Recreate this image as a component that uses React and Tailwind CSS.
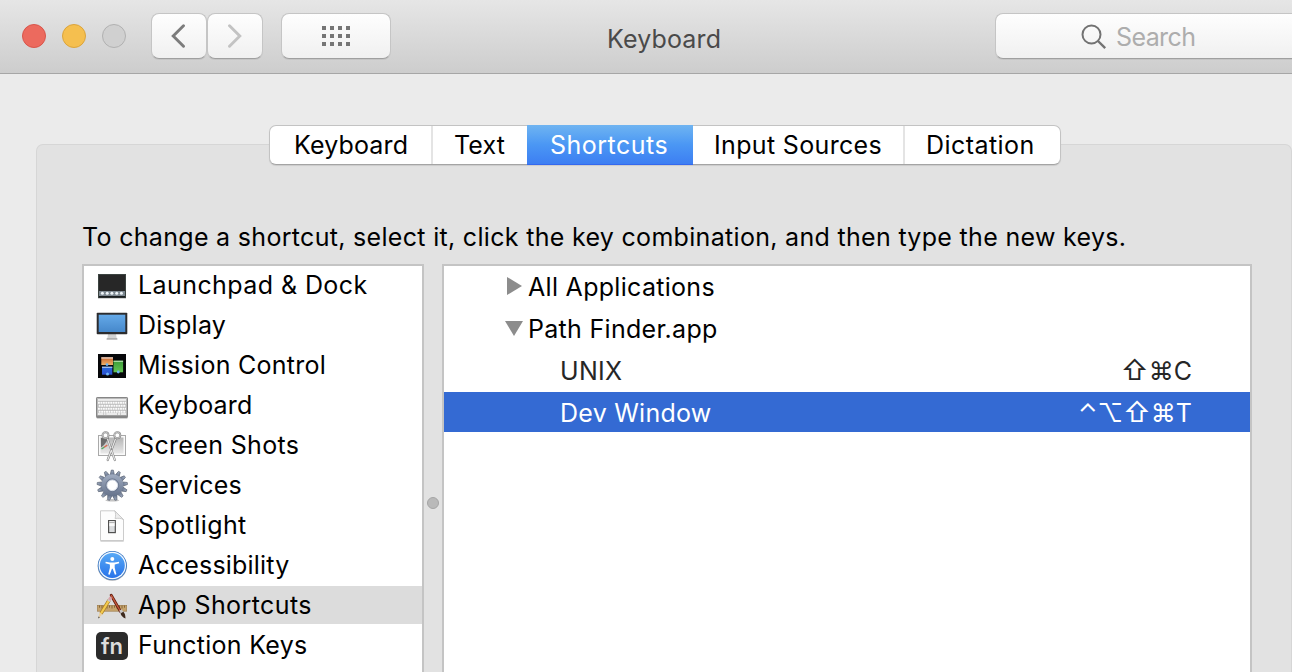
const ICONS = {
  launchpad: (
    <>
      <rect x="2" y="4.5" width="28" height="24.5" fill="#d4d4d4" />
      <rect x="2" y="4" width="28" height="24" fill="#3b4340" />
      <rect x="3" y="5" width="26" height="16" fill="#272727" />
      <rect x="3" y="21" width="26" height="5" fill="#7d8890" />
      <rect x="3" y="26" width="26" height="1.500" fill="#1b1e20" />
      {[5.5, 10.3, 15, 19.8, 24.5].map((x) => (
        <circle key={x} cx={x + 0.9} cy="23.300" r="1.500" fill="#eef4f8" />
      ))}
    </>
  ),
  display: (
    <>
      <path d="M12 24h8l.7 4.500H11.300z" fill="#d3d3d3" />
      <rect x="10.500" y="28" width="11" height="1.800" rx=".9" fill="#b0b0b0" />
      <rect x=".7" y="2.700" width="30.600" height="21.600" rx=".8" fill="#2c2c2e" />
      <rect x="2.700" y="4.700" width="26.600" height="17.300" fill="url(#screen)" />
    </>
  ),
  mission: (
    <>
      <rect x="2" y="4" width="28" height="24" fill="#060709" />
      <rect x="5.300" y="7.300" width="11.700" height="7.700" fill="url(#orange)" />
      <rect x="5.300" y="7.300" width="11.700" height="1.300" fill="#e8d9cf" />
      <rect x="6" y="16.700" width="10.300" height="8" fill="url(#blue)" />
      <rect x="6" y="16.700" width="10.300" height="1.200" fill="#a8c3ee" />
      <rect x="17.500" y="10.700" width="9.600" height="11.600" fill="url(#green)" />
      <rect x="17.500" y="10.700" width="9.600" height="1.200" fill="#b4e0ad" />
      <circle cx="11" cy="14.600" r="1.400" fill="#6bb5f5" />
      <circle cx="11.500" cy="24" r="1.500" fill="#6bb5f5" />
      <circle cx="22.300" cy="22" r="1.400" fill="#6bb5f5" />
    </>
  ),
  keyboard: (
    <>
      <rect x=".6" y="26.500" width="31" height="2.500" rx="1" fill="#d5d5d5" />
      <rect x=".5" y="7.500" width="31" height="20" rx=".6" fill="#b9b9b9" stroke="#868686" />
      <rect x="1" y="25.500" width="30" height="1.800" fill="#858585" />
      <rect x="2" y="9.200" width="28" height="1.500" fill="#fafafa" />
      {[12, 15, 18, 21].map((y, i) => (
        <path
          key={y}
          d={`M${2 + (i % 2) * 0.7} ${y + 0.8}H30`}
          stroke="#fbfbfb"
          strokeWidth="1.900"
          strokeDasharray="1.900 .55"
        />
      ))}
      <path d="M2 24h5M7.600 24h2M10.200 24h11M22 24h2M24.700 24H30" stroke="#fbfbfb" strokeWidth="1.500" />
    </>
  ),
  screenshots: (
    <>
      <rect x="2.500" y="5.500" width="27" height="20" fill="#fafafa" stroke="#a9a9a9" />
      <rect x="4.500" y="7.500" width="23" height="16" fill="url(#photo)" />
      <path d="M5 8h8l-5 7-3 2.500z" fill="#555" opacity=".8" />
      <path d="M5.500 19l3-2" stroke="#55a864" strokeWidth="1.500" />
      <path d="M8.300 17.200l3-2" stroke="#d96f55" strokeWidth="1.500" />
      <path d="M11 7.500L18.800 30M20 7.500L11.700 30" stroke="#7b7b7b" strokeWidth="2.200" strokeLinecap="round" />
      <path d="M11 7.500L18.800 30M20 7.500L11.700 30" stroke="#e6e6e6" strokeWidth="1.200" strokeLinecap="round" />
      <circle cx="9.500" cy="5.200" r="3" fill="#fff" stroke="#8c8c8c" strokeWidth="1.900" />
      <circle cx="21.300" cy="5.200" r="3" fill="#fff" stroke="#8c8c8c" strokeWidth="1.900" />
      <circle cx="9.500" cy="5.200" r="3" stroke="#cfcfcf" strokeWidth=".8" />
      <circle cx="21.300" cy="5.200" r="3" stroke="#cfcfcf" strokeWidth=".8" />
      <circle cx="15.400" cy="19" r=".8" fill="#666" />
    </>
  ),
  services: (
    <>
      <ellipse cx="16.300" cy="30.300" rx="7" ry="1.200" fill="#c4c4c4" />
      <g fill="url(#gear)" stroke="#4e5868" strokeWidth=".6">
        {Array.from({ length: 13 }, (_, i) => (
          <path
            key={i}
            d="M14.100 5.200L15.300 .1h2L18.500 5.200z"
            transform={`rotate(${(i * 360) / 13} 16.300 15.300)`}
          />
        ))}
      </g>
      <circle cx="16.300" cy="15.300" r="11" fill="url(#gear)" />
      <circle cx="16.300" cy="15.300" r="6.500" fill="#74819a" stroke="#66728a" strokeWidth=".6" />
      <circle cx="16.300" cy="15.300" r="5.300" fill="#fff" stroke="#dce1ea" strokeWidth="1" />
    </>
  ),
  spotlight: (
    <>
      <path d="M4.500 31h23.200" stroke="#c0c0c0" strokeWidth="1.200" />
      <path d="M4.500 .8h14.200l8.800 8.800v20.900h-23z" fill="#fdfdfd" stroke="#c6c6c6" strokeWidth=".9" />
      <path d="M18.700 .8c1.300 2.700 1 5.200 .4 7.800 2.700-.6 5.800-.5 8.400 1z" fill="#ededed" stroke="#c2c2c2" strokeWidth=".8" />
      <rect x="12.600" y="10.600" width="6.700" height="12" fill="#dadcde" stroke="#505050" strokeWidth="1.200" />
      <rect x="13.300" y="11.300" width="5.300" height="4.800" fill="#fafafa" />
      <path d="M13.200 12.600h5.500" stroke="#777" strokeWidth=".6" />
    </>
  ),
  accessibility: (
    <>
      <circle cx="16.300" cy="16.200" r="14.600" fill="#a5a9b0" />
      <circle cx="16.300" cy="15.500" r="14.500" fill="#3576c5" />
      <circle cx="16.300" cy="15.500" r="13.700" fill="#f4f9ff" />
      <circle cx="16.300" cy="15.500" r="12.500" fill="url(#access)" />
      <circle cx="16.300" cy="8.900" r="2" fill="#fff" />
      <path
        d="M9.700 11.800l4.300 .7h4.600l4.300-.7 .3 1.500-4.500 1.200v3.300l1.700 6.500-1.500 .5-2.200-6h-.8l-2.200 6-1.500-.5 1.700-6.500v-3.300l-4.500-1.200z"
        fill="#fff"
      />
    </>
  ),
  app: (
    <>
      <rect x="1.300" y="15.300" width="29.400" height="5.900" fill="#c6a36c" stroke="#997847" strokeWidth=".6" />
      <path d="M3.500 15.500v2.200M6 15.500v3M8.500 15.500v2.200M11 15.500v3M13.500 15.500v2.200M16 15.500v3M18.500 15.500v2.200M21 15.500v3M23.500 15.500v2.200M26 15.500v3M28.500 15.500v2.200" stroke="#694c22" strokeWidth=".7" />
      <path d="M15.200 5.200L24.500 21.500" stroke="#611d12" strokeWidth="2.900" strokeLinecap="round" />
      <path d="M15.300 5.400L24 20.500" stroke="#c65a3b" strokeWidth="1.300" strokeLinecap="round" />
      <path d="M23.200 20.700l2.500-1.500 1.600 2.900-2.500 1.500z" fill="#c7c7c7" />
      <path d="M24.500 23.500l2.800-1.700c2 1.800 2 4.200 2.200 6.700-2.500-.9-4.200-2.500-5-5z" fill="#3d291d" />
      <path d="M13.200 10L5 23.500" stroke="#a57b20" strokeWidth="3.400" />
      <path d="M13.200 10L5 23.500" stroke="#f4ca4f" strokeWidth="2.300" />
      <path d="M13.400 9.700l.9-1.500" stroke="#d9a4aa" strokeWidth="3.200" strokeLinecap="round" />
      <path d="M12.500 11.100l.8-1.300" stroke="#c9c9c9" strokeWidth="3.400" />
      <path d="M3.500 22.600l3 1.800-4.300 4.100z" fill="#e9cfa0" />
      <path d="M2.200 28.500l.4-2.100 1.300 .8z" fill="#333" />
    </>
  ),
};

const CATEGORIES = [
  ["launchpad", "Launchpad & Dock", "tracking-[0.42px]"],
  ["display", "Display", "tracking-[0.25px]"],
  ["mission", "Mission Control", "tracking-[0.26px]"],
  ["keyboard", "Keyboard", "tracking-[0.2px]"],
  ["screenshots", "Screen Shots", "tracking-[0.35px]"],
  ["services", "Services", "tracking-[0.15px]"],
  ["spotlight", "Spotlight", "tracking-[0.42px]"],
  ["accessibility", "Accessibility", "tracking-[0.18px]"],
  ["app", "App Shortcuts", "tracking-[0.4px]"],
  ["fn", "Function Keys", "tracking-[0.27px]"],
];

const TABS = [
  ["Keyboard", "w-[162px] pl-[24px] pt-px tracking-[0.15px]"],
  ["Text", "-ml-px w-[96px] pl-[21px] pt-px border-l-2 border-[#e4e4e4] tracking-[0.1px]"],
  ["Shortcuts", "w-[166px] -my-px h-[40px] pl-[23px] pt-[2px] tracking-[0.5px] text-white bg-linear-to-b from-[#6fb4f1] via-[#4b97f4] to-[#3d7ef2] border-b border-[#3468ee]"],
  ["Input Sources", "w-[210px] pl-[21px] pt-px tracking-[0.34px]"],
  ["Dictation", "w-[157px] pl-[21px] pt-px border-l-2 border-[#e4e4e4] tracking-[0.45px]"],
];

function Gradient({ id, from, to }) {
  return (
    <linearGradient id={id} x1="0" y1="0" x2="0" y2="1">
      <stop stopColor={from} />
      <stop offset="1" stopColor={to} />
    </linearGradient>
  );
}

function CategoryIcon({ name }) {
  if (name === "fn") {
    return (
      <span className="mt-[6px] flex h-[28px] w-[32px] shrink-0 items-center justify-center rounded-[5px] bg-[#2b2b2b] text-[22px] font-semibold text-[#dcdcdc]">
        fn
      </span>
    );
  }
  return (
    <svg className="mt-1 h-8 w-8 shrink-0 overflow-visible" viewBox="0 0 32 32" fill="none">
      {ICONS[name]}
    </svg>
  );
}

const toolButton =
  "flex items-center justify-center rounded-[8px] border border-[#c5c5c5] border-b-[#9f9f9f] bg-linear-to-b from-[#fefefe] to-[#f0f0f0] shadow-[0_1px_0_rgba(0,0,0,0.06)]";

function TitleBar() {
  return (
    <header className="flex h-[74px] shrink-0 items-start border-b border-[#a6a6a6] bg-linear-to-b from-[#e6e6e6] to-[#cdcdcd] pt-[13px]">
      <div className="ml-[22px] mt-[11px] flex gap-4">
        <span className="size-6 rounded-full border border-[#d8554b] bg-[#ec6a5e]" />
        <span className="size-6 rounded-full border border-[#dba43c] bg-[#f5bf4f]" />
        <span className="size-6 rounded-full border border-[#b1b1b1] bg-[#d0d0d0]" />
      </div>
      <div className="ml-[25px] flex">
        <button className={`${toolButton} h-[46px] w-[56px]`}>
          <svg className="h-6 w-4" viewBox="0 0 16 24" fill="none">
            <path d="M12.500 1.700L2.200 12l10.300 10.300" stroke="#7c7c7c" strokeWidth="2.900" strokeLinecap="round" />
          </svg>
        </button>
        <button className={`${toolButton} h-[46px] w-[56px]`}>
          <svg className="h-6 w-4" viewBox="0 0 16 24" fill="none">
            <path d="M2.500 1.700L12.800 12 2.500 22.300" stroke="#c3c3c3" strokeWidth="2.900" strokeLinecap="round" />
          </svg>
        </button>
      </div>
      <button className={`${toolButton} ml-[18px] h-[46px] w-[110px]`}>
        <span className="grid grid-cols-4 gap-1">
          {Array.from({ length: 12 }, (_, i) => (
            <span key={i} className="size-1 bg-[#757575]" />
          ))}
        </span>
      </button>
      <h1 className="ml-[216px] mt-[11px] w-[388px] text-[25px] leading-[30px] tracking-[0.15px] text-[#4a4a4a]">
        Keyboard
      </h1>
      <div className="flex h-[46px] flex-1 items-center rounded-l-[8px] border border-r-0 border-[#c5c5c5] border-b-[#9f9f9f] bg-linear-to-b from-[#fefefe] to-[#f0f0f0] pl-[85px] pt-[2px] text-[25px] text-[#adadad] shadow-[0_1px_0_rgba(0,0,0,0.06)]">
        <svg className="mr-[9px] size-[26px]" viewBox="0 0 26 26" fill="none">
          <circle cx="10.500" cy="10.500" r="9" stroke="#727272" strokeWidth="2" />
          <path d="M17 17l7.200 7.200" stroke="#727272" strokeWidth="2.400" />
        </svg>
        <span className="leading-[30px] tracking-[-0.6px]">Search</span>
      </div>
    </header>
  );
}

export default function App() {
  return (
    <div className="flex h-[672px] w-[1292px] flex-col overflow-hidden bg-[#ebebeb] font-['Inter','Liberation_Sans',sans-serif] text-[25px] text-black">
      <svg className="absolute size-0">
        <defs>
          <Gradient id="screen" from="#64a9e8" to="#4688cb" />
          <Gradient id="orange" from="#c8622c" to="#edb26a" />
          <Gradient id="blue" from="#2469d8" to="#2c4fd0" />
          <Gradient id="green" from="#3c9c3a" to="#64c653" />
          <Gradient id="photo" from="#b5b5b5" to="#e9e9e9" />
          <Gradient id="gear" from="#a0acc1" to="#66738b" />
          <Gradient id="access" from="#58a9f5" to="#2773ea" />
        </defs>
      </svg>
      <TitleBar />
      <main className="ml-[36px] mt-[70px] flex flex-1 flex-col rounded-t-[7px] border border-b-0 border-[#d6d6d6] bg-[#e2e2e2]">
        <nav className="-mt-[20px] ml-[232px] flex h-[40px] w-[792px] rounded-[7px] border border-[#c3c3c3] border-b-[#a4a4a4] bg-white shadow-[0_1px_1px_rgba(0,0,0,0.1)]">
          {TABS.map(([label, cls]) => (
            <button key={label} className={`flex items-center text-left ${cls}`}>
              {label}
            </button>
          ))}
        </nav>
        <p className="ml-[45px] mt-[57px] whitespace-nowrap leading-[30px] tracking-[0.31px]">
          To change a shortcut, select it, click the key combination, and then type the new keys.
        </p>
        <div className="ml-[45px] mt-[12px] flex h-[410px]">
          <ul className="w-[342px] border-2 border-b-0 border-[#c4c4c4] bg-white">
            {CATEGORIES.map(([icon, label, track]) => (
              <li key={label} className={`mb-[2px] flex h-[38px] pl-[12px] ${icon === "app" ? "bg-[#dcdcdc]" : ""}`}>
                <CategoryIcon name={icon} />
                <span className={`ml-[10px] whitespace-nowrap leading-[38px] ${track}`}>{label}</span>
              </li>
            ))}
          </ul>
          <div className="flex w-[18px] justify-center pt-[233px]">
            <span className="size-3 rounded-full border border-[#a5a5a5] bg-[#b9b9b9]" />
          </div>
          <div className="w-[810px] border-2 border-b-0 border-[#c4c4c4] bg-white leading-[42px]">
            <div className="flex h-[42px] items-center pl-[63px]">
              <svg className="mb-[2px] mr-[6px] h-[18px] w-[15px]" viewBox="0 0 15 18">
                <path d="M0 0L15 9 0 18z" fill="#8c8c8c" />
              </svg>
              <span className="tracking-[0.3px]">All Applications</span>
            </div>
            <div className="flex h-[42px] items-center pl-[61px]">
              <svg className="mb-[2px] mr-[5px] h-[15px] w-[18px]" viewBox="0 0 18 15">
                <path d="M0 0h18L9 15z" fill="#8c8c8c" />
              </svg>
              <span className="tracking-[0.3px]">Path Finder.app</span>
            </div>
            <div className="flex h-[42px] justify-between pl-[116px] pr-[58px] text-[#262626]">
              <span className="tracking-[0.3px]">UNIX</span>
              <span>
                <span className="text-[27px]">⇧</span>⌘C
              </span>
            </div>
            <div className="flex h-[40px] justify-between bg-[#346ad3] pl-[116px] pr-[58px] text-white">
              <span className="tracking-[0.25px]">Dev Window</span>
              <span>
                ⌃⌥<span className="text-[27px]">⇧</span>⌘T
              </span>
            </div>
          </div>
        </div>
      </main>
    </div>
  );
}
